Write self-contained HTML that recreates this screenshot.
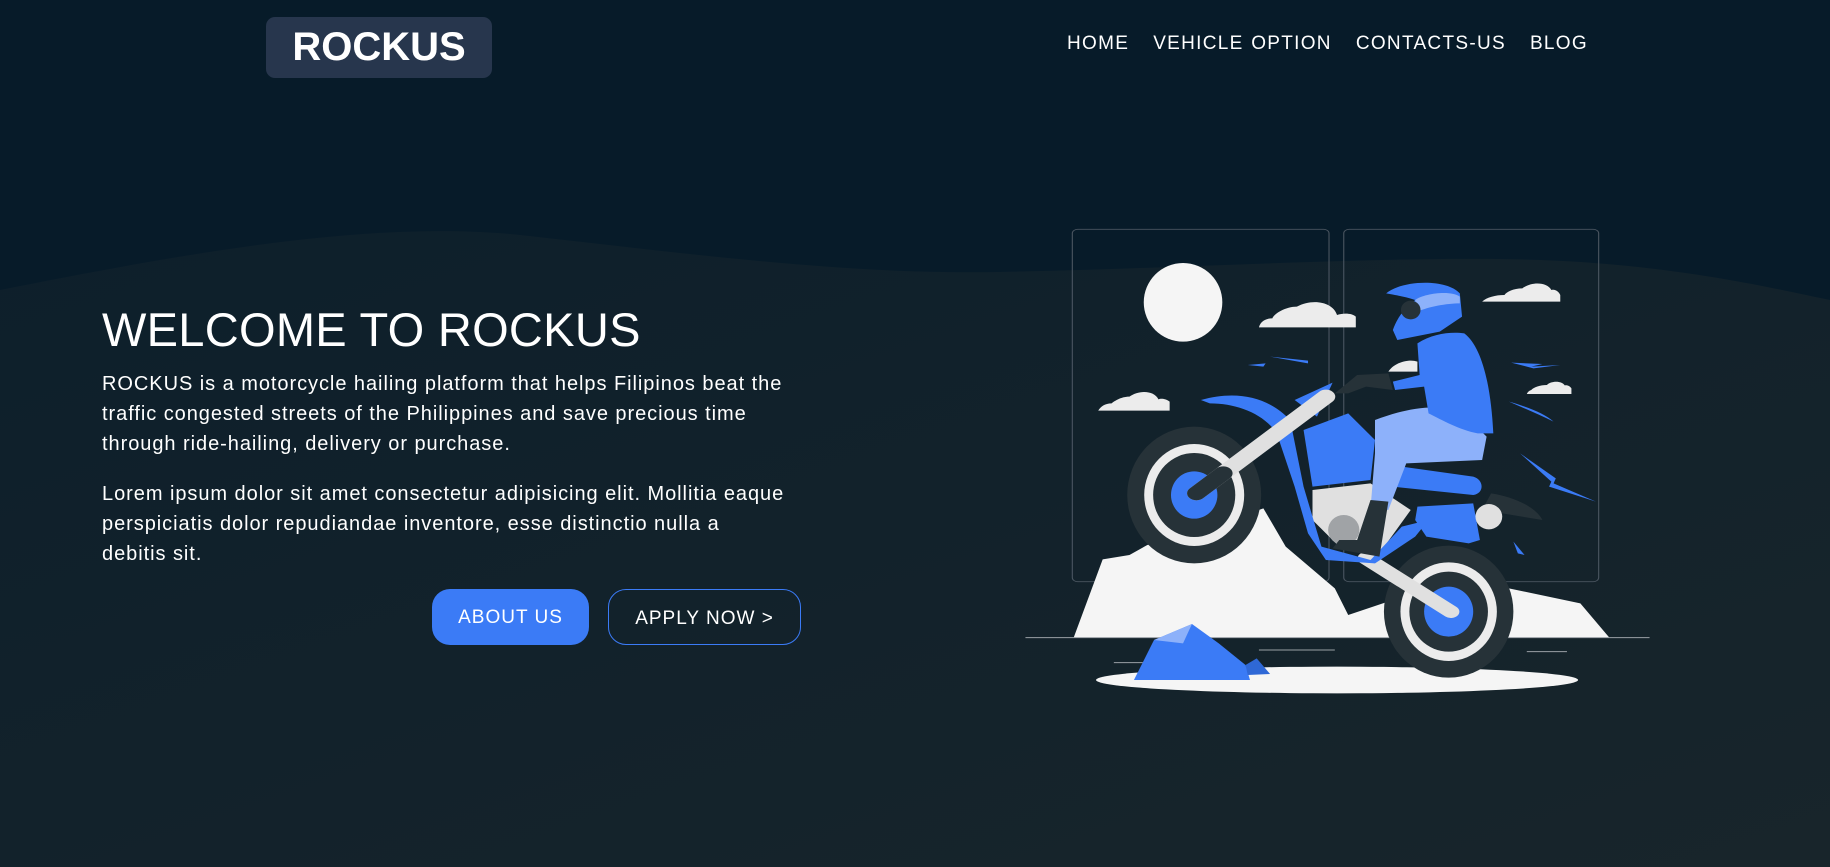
<!DOCTYPE html>
<html><head><meta charset="utf-8"><style>
*{margin:0;padding:0;box-sizing:border-box}
body{width:1830px;height:867px;overflow:hidden;background:#071b29;font-family:"Liberation Sans",sans-serif;color:#fff;position:relative}
.bg{position:absolute;left:0;top:0}
.logo{position:absolute;left:266px;top:17px;width:226px;height:61px;background:#27364d;border-radius:9px;font-size:40px;font-weight:bold;text-align:center;line-height:61px;letter-spacing:0}
.nav{position:absolute;top:33px;left:1067px;font-size:19px;letter-spacing:1.3px;word-spacing:1px}
.nav span{margin-right:24px}
h1{position:absolute;left:102px;top:302px;font-size:47px;font-weight:normal;letter-spacing:.3px}
p{position:absolute;left:102px;width:700px;font-size:20px;letter-spacing:.95px;line-height:30px}
.btn{position:absolute;top:589px;height:56px;border-radius:18px;font-size:19px;letter-spacing:1px;line-height:58px;text-align:center}
</style></head><body>
<svg class="bg" width="1830" height="867">
<defs><linearGradient id="g" x1="0" y1="0" x2="1" y2="1"><stop offset="0" stop-color="#0d1f2b"/><stop offset="1" stop-color="#18252b"/></linearGradient></defs>
<path d="M0,290 C200,250 380,220 520,235 C700,255 850,275 1000,272 C1200,268 1400,255 1540,260 C1680,265 1780,290 1830,300 L1830,867 L0,867Z" fill="url(#g)"/>
</svg>
<div class="logo">ROCKUS</div>
<div class="nav"><span>HOME</span><span>VEHICLE OPTION</span><span>CONTACTS-US</span><span>BLOG</span></div>
<h1>WELCOME TO ROCKUS</h1>
<p style="top:369px">ROCKUS is a motorcycle hailing platform that helps Filipinos beat the traffic congested streets of the Philippines and save precious time through ride-hailing, delivery or purchase.</p>
<p style="top:479px;width:760px">Lorem ipsum dolor sit amet consectetur adipisicing elit. Mollitia eaque<br>perspiciatis dolor repudiandae inventore, esse distinctio nulla a<br>debitis sit.</p>
<div class="btn" style="left:432px;width:157px;background:#3b7bf6">ABOUT US</div>
<div class="btn" style="left:608px;width:193px;border:1.5px solid #3b7bf6">APPLY NOW &gt;</div>
<svg style="position:absolute;left:1000px;top:200px" width="700" height="520" viewBox="0 0 1568 1560" preserveAspectRatio="none">
<rect x="162" y="88" width="575" height="1057" rx="12" fill="none" stroke="#4a5560" stroke-width="2.5"/>
<rect x="770" y="88" width="571" height="1057" rx="12" fill="none" stroke="#4a5560" stroke-width="2.5"/>
<ellipse cx="410" cy="307" rx="88" ry="118" fill="#f5f5f5"/>
<g fill="#ececec">
<path d="M580,382 L797,382 L797,350 C790,340 770,338 755,345 C745,305 700,295 665,320 C640,320 615,340 610,355 C595,355 583,365 580,382Z"/>
<path d="M220,632 L380,632 L380,605 C370,595 360,595 355,598 C345,570 310,570 290,590 C270,590 255,605 250,610 C235,610 225,620 220,632Z"/>
<path d="M1080,305 L1255,305 L1255,285 C1250,270 1240,268 1235,270 C1225,245 1190,245 1170,265 C1150,265 1135,275 1130,285 C1110,285 1090,292 1080,305Z"/>
<path d="M1180,582 L1280,582 L1280,565 C1275,555 1268,555 1265,556 C1258,542 1235,542 1225,555 C1210,555 1195,562 1190,570 C1185,572 1182,576 1180,582Z"/>
<path d="M870,515 C880,490 915,475 935,485 L935,515Z"/>
</g>
<path d="M165,1313 L230,1078 L290,1065 L330,1035 L450,990 L590,925 L640,1040 L750,1165 L780,1245 L880,1200 L1000,1200 L1140,1165 L1300,1210 L1365,1313Z" fill="#f5f5f5"/>
<line x1="57" y1="1313" x2="1455" y2="1313" stroke="#9aa0a6" stroke-width="3"/>
<line x1="580" y1="1350" x2="750" y2="1350" stroke="#9aa0a6" stroke-width="3"/>
<line x1="255" y1="1388" x2="320" y2="1388" stroke="#9aa0a6" stroke-width="3"/>
<line x1="1180" y1="1355" x2="1270" y2="1355" stroke="#9aa0a6" stroke-width="3"/>
<ellipse cx="755" cy="1440" rx="540" ry="40" fill="#f5f5f5"/>
<path d="M300,1440 L345,1320 L430,1272 L490,1330 L550,1395 L560,1440Z" fill="#3b7bf6"/>
<path d="M345,1320 L430,1272 L410,1330Z" fill="#8db1fa"/>
<path d="M550,1395 L575,1375 L605,1422 L555,1425Z" fill="#2f68d6"/>
<g fill="#3b7bf6">
<path d="M555,495 L595,490 L590,500Z"/><path d="M605,470 L690,482 L690,490Z"/>
<path d="M1145,488 L1215,492 L1190,500 L1255,495 L1195,505Z"/>
<path d="M1140,605 C1180,620 1220,640 1240,665 C1210,645 1175,625 1140,605Z"/>
<path d="M1165,760 L1245,835 L1240,850 L1335,905 L1230,860 L1235,845Z"/>
<path d="M1150,1025 L1175,1065 L1160,1060Z"/>
</g>
<ellipse cx="435" cy="885" rx="150" ry="205" fill="#263238"/>
<ellipse cx="435" cy="885" rx="112" ry="153" fill="#ececec"/>
<ellipse cx="435" cy="885" rx="92" ry="126" fill="#263238"/>
<ellipse cx="435" cy="885" rx="52" ry="71" fill="#3b7bf6"/>
<ellipse cx="1005" cy="1235" rx="145" ry="198" fill="#263238"/>
<ellipse cx="1005" cy="1235" rx="108" ry="148" fill="#ececec"/>
<ellipse cx="1005" cy="1235" rx="88" ry="120" fill="#263238"/>
<ellipse cx="1005" cy="1235" rx="55" ry="75" fill="#3b7bf6"/>
<path d="M1100,880 C1150,890 1200,920 1215,960 L1080,930Z" fill="#263238"/>
<path d="M700,870 L830,850 L920,930 L850,1060 L760,1040 L700,960Z" fill="#e0e0e0"/>
<ellipse cx="770" cy="990" rx="35" ry="45" fill="#a0a3a6"/>
<path d="M820,1075 L1010,1235" stroke="#e0e0e0" stroke-width="38" stroke-linecap="round"/>
<path d="M450,600 C530,570 600,590 650,660 L680,860 L720,1040 L830,1080 L900,980 L960,960 L930,1010 L840,1090 L730,1080 L690,1000 L660,860 L620,700 C590,640 530,610 470,610Z" fill="#3b7bf6"/>
<path d="M680,690 L780,640 L840,720 L830,840 L700,860Z" fill="#3b7bf6"/>
<path d="M660,600 L745,548 L710,650Z" fill="#3b7bf6"/>
<path d="M440,880 L730,590" stroke="#e0e0e0" stroke-width="42" stroke-linecap="round"/>
<path d="M440,880 L500,820" stroke="#263238" stroke-width="42" stroke-linecap="round"/>
<path d="M900,800 L1060,830 C1085,840 1085,880 1060,885 L880,860Z" fill="#3b7bf6"/>
<path d="M935,920 L1060,910 L1075,1020 L1050,1030 L955,1010 L930,960Z" fill="#3b7bf6"/>
<ellipse cx="1095" cy="950" rx="30" ry="38" fill="#e0e0e0"/>
<path d="M750,580 L800,525 L870,520 L880,570 L820,560 L780,580Z" fill="#263238"/>
<path d="M840,660 C900,630 960,610 1030,630 L1090,710 L1080,780 L910,790 L870,930 L830,925 L840,760Z" fill="#8db1fa"/>
<path d="M935,430 C970,400 1010,395 1040,400 C1080,440 1100,560 1105,700 L1070,700 C1030,690 990,660 960,640 L950,560 L885,570 L880,545 L940,525Z" fill="#3b7bf6"/>
<path d="M800,1020 L830,900 L870,905 L850,1070 L745,1045 L760,1020Z" fill="#263238"/>
<path d="M865,280 C900,240 1000,235 1030,280 L1035,350 L985,395 L890,420 L880,390 C890,350 910,320 930,300 C910,290 885,285 865,280Z" fill="#3b7bf6"/>
<path d="M930,300 C950,280 1010,270 1030,290 L1030,310 C1000,310 960,320 935,335Z" fill="#8db1fa"/>
<ellipse cx="920" cy="330" rx="22" ry="28" fill="#263238"/>
</svg>
</body></html>
